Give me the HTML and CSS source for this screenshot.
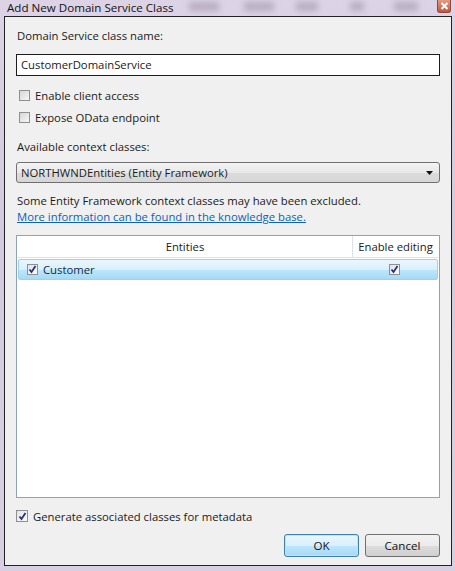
FILE: index.html
```html
<!DOCTYPE html>
<html lang="en">
<head>
    <meta charset="utf-8">
    <title>Add New Domain Service Class</title>
    <link rel="stylesheet" href="styles.css">
</head>
<body>
<div class="window">
    <div class="titlebar">
        <span class="title">Add New Domain Service Class</span>
        <span class="glass g1"></span>
        <span class="glass g2"></span>
        <span class="glass g3"></span>
        <span class="glass g4"></span>
        <span class="glass g5"></span>
        <span class="close">
            <svg width="9" height="8" viewBox="0 0 9 8"><path d="M1.5 1 L7.5 7 M7.5 1 L1.5 7" stroke="#fff" stroke-width="2"/></svg>
        </span>
    </div>

    <div class="panel">
        <div class="label">Domain Service class name:</div>
        <div class="textbox">CustomerDomainService</div>

        <label class="check"><span class="box"></span>Enable client access</label>
        <label class="check"><span class="box"></span>Expose OData endpoint</label>

        <div class="label second">Available context classes:</div>
        <div class="combo">
            <span>NORTHWNDEntities (Entity Framework)</span>
            <svg width="7" height="4" viewBox="0 0 7 4"><path d="M0 0 H7 L3.5 4 Z" fill="#111"/></svg>
        </div>

        <p class="note">Some Entity Framework context classes may have been excluded.<br>
            <a href="#">More information can be found in the knowledge base.</a></p>

        <div class="grid">
            <div class="grid-head">
                <div class="col-name">Entities</div>
                <div class="col-edit">Enable editing</div>
            </div>
            <div class="grid-row">
                <div class="col-name"><span class="box checked"><svg width="9" height="9" viewBox="0 0 9 9"><path d="M1.5 4.5 L3.5 7 L7.5 1" fill="none" stroke="#2a2f7a" stroke-width="1.8"/></svg></span>Customer</div>
                <div class="col-edit"><span class="box checked"><svg width="9" height="9" viewBox="0 0 9 9"><path d="M1.5 4.5 L3.5 7 L7.5 1" fill="none" stroke="#2a2f7a" stroke-width="1.8"/></svg></span></div>
            </div>
        </div>

        <label class="check meta"><span class="box checked"><svg width="9" height="9" viewBox="0 0 9 9"><path d="M1.5 4.5 L3.5 7 L7.5 1" fill="none" stroke="#2a2f7a" stroke-width="1.8"/></svg></span>Generate associated classes for metadata</label>

        <div class="buttons">
            <button class="btn default">OK</button>
            <button class="btn">Cancel</button>
        </div>
    </div>
</div>
</body>
</html>
```

FILE: styles.css
```css
body {
    margin: 0;
    background: #d6cde0;
    font-family: "Open Sans", "Noto Sans", sans-serif;
    font-size: 11.3px;
    color: #1a1a1a;
}

.window {
    width: 455px;
    height: 571px;
    padding: 0 3px 5px 4px;
    box-sizing: border-box;
    background: linear-gradient(#ddd3e6, #d4cadf 40%, #d8d0e2);
    display: flex;
    flex-direction: column;
}

.titlebar {
    height: 16px;
    position: relative;
    overflow: hidden;
}
.title {
    position: relative;
    z-index: 2;
    margin-left: 3px;
    font-size: 11.6px;
    line-height: 14px;
    color: #111;
}
.glass {
    position: absolute;
    top: 2px;
    height: 9px;
    background: #a89db2;
    filter: blur(3px);
    opacity: 0.7;
}
.g1 { left: 185px; width: 30px; }
.g2 { left: 240px; width: 30px; }
.g3 { left: 292px; width: 22px; }
.g4 { left: 346px; width: 14px; }
.g5 { left: 390px; width: 24px; }
.close {
    position: absolute;
    right: 1px;
    top: 0;
    width: 14px;
    height: 13px;
    border: 1px solid #8a4a3c;
    border-top: 0;
    border-radius: 0 0 3px 3px;
    background: linear-gradient(#e49a84, #c6553c);
    box-sizing: border-box;
    display: flex;
    align-items: center;
    justify-content: center;
    z-index: 2;
}

.panel {
    flex: 1;
    border: 1px solid #222;
    background: #f0f0f0;
    padding: 11px 11px 0 11px;
    display: flex;
    flex-direction: column;
}

.label {
    line-height: 16px;
    margin-bottom: 10px;
    padding-left: 1px;
}
.label.second {
    margin-top: 14px;
    margin-bottom: 7px;
}

.textbox {
    height: 22px;
    box-sizing: border-box;
    border: 1px solid #1c1c1c;
    background: #fff;
    padding: 0 4px;
    line-height: 20px;
}

.check {
    display: flex;
    align-items: center;
    height: 16px;
    margin-top: 6px;
    padding-left: 3px;
}
.check:first-of-type { margin-top: 11px; }

.box {
    width: 11px;
    height: 11px;
    box-sizing: border-box;
    border: 1px solid #8e8f8f;
    background: linear-gradient(135deg, #d6d6d6, #f7f7f7);
    margin-right: 5px;
    display: inline-flex;
    align-items: center;
    justify-content: center;
    flex-shrink: 0;
}
.box.checked {
    background: linear-gradient(135deg, #e0e3ea, #fafbfc);
}

.combo {
    height: 21px;
    box-sizing: border-box;
    border: 1px solid #707070;
    border-radius: 3px;
    background: linear-gradient(#f4f4f4, #e8e8e8 50%, #dcdcdc 51%, #d6d6d6);
    padding: 0 6px 0 4px;
    display: flex;
    align-items: center;
    justify-content: space-between;
}

.note {
    margin: 10px 0 0 1px;
    line-height: 16px;
}
.note a {
    color: #0a61c3;
    text-decoration: underline;
}

.grid {
    margin-top: 10px;
    height: 263px;
    box-sizing: border-box;
    border: 1px solid #8da3b8;
    background: #fff;
    padding: 0 1px;
}
.grid-head {
    display: flex;
    height: 21px;
    border-bottom: 1px solid #dde2e8;
}
.grid-head .col-name {
    flex: 1;
    text-align: center;
    line-height: 21px;
    border-right: 1px solid #dde2e8;
}
.grid-head .col-edit {
    width: 85px;
    text-align: center;
    line-height: 21px;
}
.grid-row {
    display: flex;
    height: 21px;
    margin-top: 1px;
    border: 1px solid #9bd2ee;
    border-radius: 2px;
    background: linear-gradient(#eaf6fd, #d9f0fc 50%, #bee6fd 51%, #a7d9f5);
    box-sizing: border-box;
}
.grid-row .col-name {
    flex: 1;
    display: flex;
    align-items: center;
    padding-left: 8px;
    color: #0f2a45;
}
.grid-row .col-edit {
    width: 85px;
    display: flex;
    align-items: center;
    justify-content: center;
    padding-left: 2px;
}
.grid-row .col-edit .box { margin-right: 0; }

.check.meta {
    margin-top: 10px;
    padding-left: 0;
}
.check.meta .box {
    width: 12px;
    height: 12px;
}

.buttons {
    display: flex;
    justify-content: flex-end;
    gap: 6px;
    margin-top: 10px;
}
.btn {
    width: 75px;
    height: 23px;
    font-family: inherit;
    font-size: 11.6px;
    color: #111;
    border: 1px solid #707070;
    border-radius: 3px;
    background: linear-gradient(#f2f2f2, #ebebeb 50%, #dddddd 51%, #cfcfcf);
    padding: 0;
}
.btn.default {
    border-color: #3c7fb1;
    background: linear-gradient(#eaf6fd, #d9f0fc 50%, #bee6fd 51%, #a7d9f5);
    box-shadow: inset 0 0 0 1px #bfe4f7;
}
```
